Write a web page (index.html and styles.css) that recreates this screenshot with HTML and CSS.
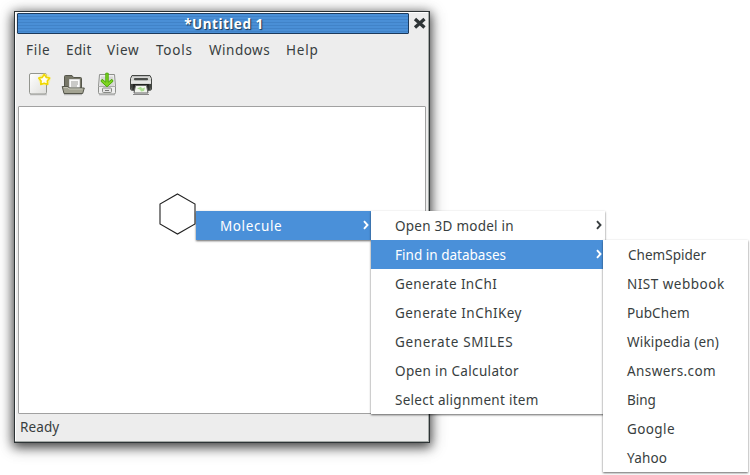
FILE: index.html
```html
<!DOCTYPE html>
<html lang="en">
<head>
<meta charset="utf-8">
<title>Untitled 1</title>
<link rel="stylesheet" href="styles.css">
</head>
<body>
<main class="window">
  <header class="titlebar">
    <h1 class="title">*Untitled 1</h1>
    <button class="close" aria-label="Close"><svg width="13" height="12" viewBox="0 0 13 12"><path d="M2 2L11.5 10.5M11.5 2L2 10.5" stroke="#2e3436" stroke-width="3.3"/></svg></button>
  </header>
  <nav class="menubar">
    <span class="file">File</span><span class="edit">Edit</span><span class="view">View</span><span class="tools">Tools</span><span class="windows">Windows</span><span class="help">Help</span>
  </nav>
  <div class="toolbar">
    <svg width="24" height="24" viewBox="0 0 24 24">
      <defs><linearGradient id="paper" x2="1" y2="1"><stop stop-color="#fff"/><stop offset="1" stop-color="#dededb"/></linearGradient></defs>
      <path d="M3 22.8h17" stroke="#bbb" stroke-width="1"/>
      <rect x="2.5" y="1.5" width="17" height="20.5" rx="1.5" fill="url(#paper)" stroke="#93958f"/>
      <circle cx="17.5" cy="7.5" r="6" fill="#fff27a" opacity=".6"/>
      <path d="M17.2 2.4l2 3 3.5.6-2.4 2.9.4 3.6-3.5-1.3-3.4 1.3.3-3.6-2.4-2.9 3.6-.6z" fill="#fffef0" stroke="#f0d800" stroke-width="1.6" stroke-linejoin="round"/>
    </svg>
    <svg width="24" height="24" viewBox="0 0 24 24">
      <path d="M3.5 16V4.5q0-1 1-1H11l1.5 2h7q1 0 1 1V16z" fill="#777768" stroke="#55564b"/>
      <path d="M8.5 7.5h10v8h-10z" fill="#fafafa" stroke="#ddd"/>
      <path d="M10 10h7M10 12h7M10 14h6" stroke="#9a9a96"/>
      <path d="M1.2 14.5H7l1.5 1.5h14.8l-1.6 5.5H3z" fill="#a3a392" stroke="#55564b" stroke-linejoin="round"/>
      <path d="M2.7 15.6h4l1.4 1.4h13.5" fill="none" stroke="#c8c8bc"/>
      <path d="M3 22.7h18" stroke="#aaa"/>
    </svg>
    <svg width="24" height="24" viewBox="0 0 24 24">
      <path d="M4.5 2.5h15l1 12v6q0 1.5-1.5 1.5H5q-1.5 0-1.5-1.5v-6z" fill="#eee" stroke="#8e908c"/>
      <path d="M6 4.5h12l1 9.5H5z" fill="#d7d7d4"/>
      <path d="M4 14.5h16" stroke="#aaa"/>
      <rect x="7.5" y="16" width="9" height="4.5" rx="1" fill="#e5e5e5" stroke="#888a85"/>
      <path d="M10 18.5h4" stroke="#777"/>
      <path d="M10.8 1.2h2.4v9l3.7-2.9 1.2 1.9-6.1 5.6-6.1-5.6 1.2-1.9 3.7 2.9z" fill="#7ed321" stroke="#4cab09" stroke-linejoin="round"/>
      <path d="M4 22.8h16" stroke="#aaa"/>
    </svg>
    <svg width="24" height="24" viewBox="0 0 24 24">
      <path d="M3 3.5h18l1.5 3V17q0 1-1 1h-19q-1 0-1-1V6.5z" fill="#d6d7d4" stroke="#444744"/>
      <path d="M3.5 4.5h17" stroke="#bbb"/>
      <path d="M6 7.2h12" stroke="#4a4d4a" stroke-width="2.2" stroke-linecap="round"/>
      <path d="M2 10h20" stroke="#f5f5f5"/>
      <path d="M1.5 12h21l-1 6.5h-19z" fill="#40433f"/>
      <path d="M4 12h16l-1 8H5z" fill="#1f211f"/>
      <path d="M6.5 13.5h11l1.5 7.5H5z" fill="#f1f4ed" stroke="#666"/>
      <path d="M8 16.5l4-1.8 1 1.8 3-1-1 3.5-3 .5-1-2z" fill="#a8dc8e"/>
      <path d="M4 22.5h16" stroke="#888"/>
    </svg>
  </div>
  <section class="canvas">
    <svg class="ring" width="38" height="44" viewBox="0 0 38 44"><path d="M18.5 2L36 12V32L18.5 42L1 32V12Z" fill="none" stroke="#222" stroke-width="1.1"/></svg>
  </section>
  <footer class="status">Ready</footer>
</main>

<ul class="menu root-menu">
  <li class="item active"><span class="molecule">Molecule</span><svg class="arrow" width="6" height="10" viewBox="0 0 6 10"><path d="M1 1.2L4.5 5L1 8.8"/></svg></li>
</ul>
<ul class="menu molecule-menu">
  <li class="item"><span class="open-model">Open 3D model in</span><svg class="arrow" width="6" height="10" viewBox="0 0 6 10"><path d="M1 1.2L4.5 5L1 8.8"/></svg></li>
  <li class="item active"><span class="find">Find in databases</span><svg class="arrow" width="6" height="10" viewBox="0 0 6 10"><path d="M1 1.2L4.5 5L1 8.8"/></svg></li>
  <li class="item"><span>Generate InChI</span></li>
  <li class="item"><span class="inchikey">Generate InChIKey</span></li>
  <li class="item"><span class="smiles">Generate SMILES</span></li>
  <li class="item"><span class="calculator">Open in Calculator</span></li>
  <li class="item"><span class="alignment">Select alignment item</span></li>
</ul>
<ul class="menu database-menu">
  <li class="item"><span class="chemspider">ChemSpider</span></li>
  <li class="item"><span class="nist">NIST webbook</span></li>
  <li class="item"><span class="pubchem">PubChem</span></li>
  <li class="item"><span class="wikipedia">Wikipedia (en)</span></li>
  <li class="item"><span>Answers.com</span></li>
  <li class="item"><span class="bing">Bing</span></li>
  <li class="item"><span>Google</span></li>
  <li class="item"><span class="yahoo">Yahoo</span></li>
</ul>
</body>
</html>
```
FILE: styles.css
```css
* { box-sizing: border-box; }
body {
  margin: 0;
  width: 750px;
  height: 475px;
  overflow: hidden;
  padding: 11px 0 0 14px;
  background: #fff;
  color: #383e40;
  font: 13.5px/20px "Noto Sans", "Open Sans", sans-serif;
  letter-spacing: .4px;
}
.window {
  display: flex;
  flex-direction: column;
  width: 416px;
  height: 432px;
  padding: 1px 2px;
  background: #ededed;
  border: 1px solid #2e3436;
  box-shadow: inset -1px -1px #a5aaa7, inset 1px 1px #fff, 0 3px 10px 1px rgba(0,0,0,.65), 0 3px 16px 1px rgba(0,0,0,.25);
}
.titlebar { display: flex; height: 21px; }
.title {
  width: 392px;
  margin: 0;
  padding-left: 22px;
  border: 1px solid #1c3a5c;
  border-radius: 1px;
  background: repeating-linear-gradient(#4a8fd6 0 2px, #4183c8 2px 3px);
  color: #fff;
  font-size: 13.5px;
  line-height: 20px;
  text-align: center;
  letter-spacing: .5px;
  text-shadow: 1px 1px 1px #173450;
}
.close { align-self: flex-start; margin: 0 0 0 4px; padding: 4px 0 0; border: 0; background: none; line-height: 0; }
.menubar { display: flex; height: 34px; padding: 6px 0 0 9px; }
.file { width: 40px; letter-spacing: .7px; }
.edit { width: 41px; }
.view { width: 49px; letter-spacing: .7px; }
.tools { width: 53px; letter-spacing: .8px; }
.windows { width: 77px; letter-spacing: .5px; }
.help { letter-spacing: .8px; }
.toolbar { display: flex; gap: 10px; height: 38px; padding: 4px 0 0 10px; }
.canvas {
  position: relative;
  width: 408px;
  height: 308px;
  margin-left: 1px;
  background: #fff;
  border: 1px solid #a1a1a1;
  border-radius: 1px;
}
.ring { position: absolute; left: 140px; top: 85px; }
.status { padding: 3px 0 0 3px; letter-spacing: .1px; }
.menu {
  position: absolute;
  margin: 0;
  padding: 0;
  list-style: none;
  background: #fff;
  box-shadow: 0 1px 2px rgba(0,0,0,.6);
}
.item { display: flex; align-items: center; justify-content: space-between; height: 29px; padding: 1px 4px 0 24px; white-space: nowrap; }
.active { background: #4a90d9; color: #fff; }
.arrow { fill: none; stroke: currentColor; stroke-width: 1.9; margin-top: -3px; }
.root-menu { left: 196px; top: 211px; width: 175px; }
.root-menu .arrow { margin-right: -2px; }
.molecule-menu { left: 371px; top: 211px; width: 234px; }
.molecule-menu .arrow { margin-right: -1px; }
.database-menu { left: 603px; top: 240px; width: 145px; }
.molecule { letter-spacing: .6px; }
.open-model { letter-spacing: .25px; }
.find { letter-spacing: .02px; }
.inchikey { letter-spacing: .45px; }
.smiles { letter-spacing: .65px; }
.calculator { letter-spacing: .35px; }
.alignment { letter-spacing: .28px; }
.chemspider { margin-left: 1px; letter-spacing: .03px; }
.nist { letter-spacing: .5px; }
.pubchem { letter-spacing: .1px; }
.wikipedia { letter-spacing: .18px; }
.bing { letter-spacing: 0; }
.yahoo { letter-spacing: .2px; }
```
